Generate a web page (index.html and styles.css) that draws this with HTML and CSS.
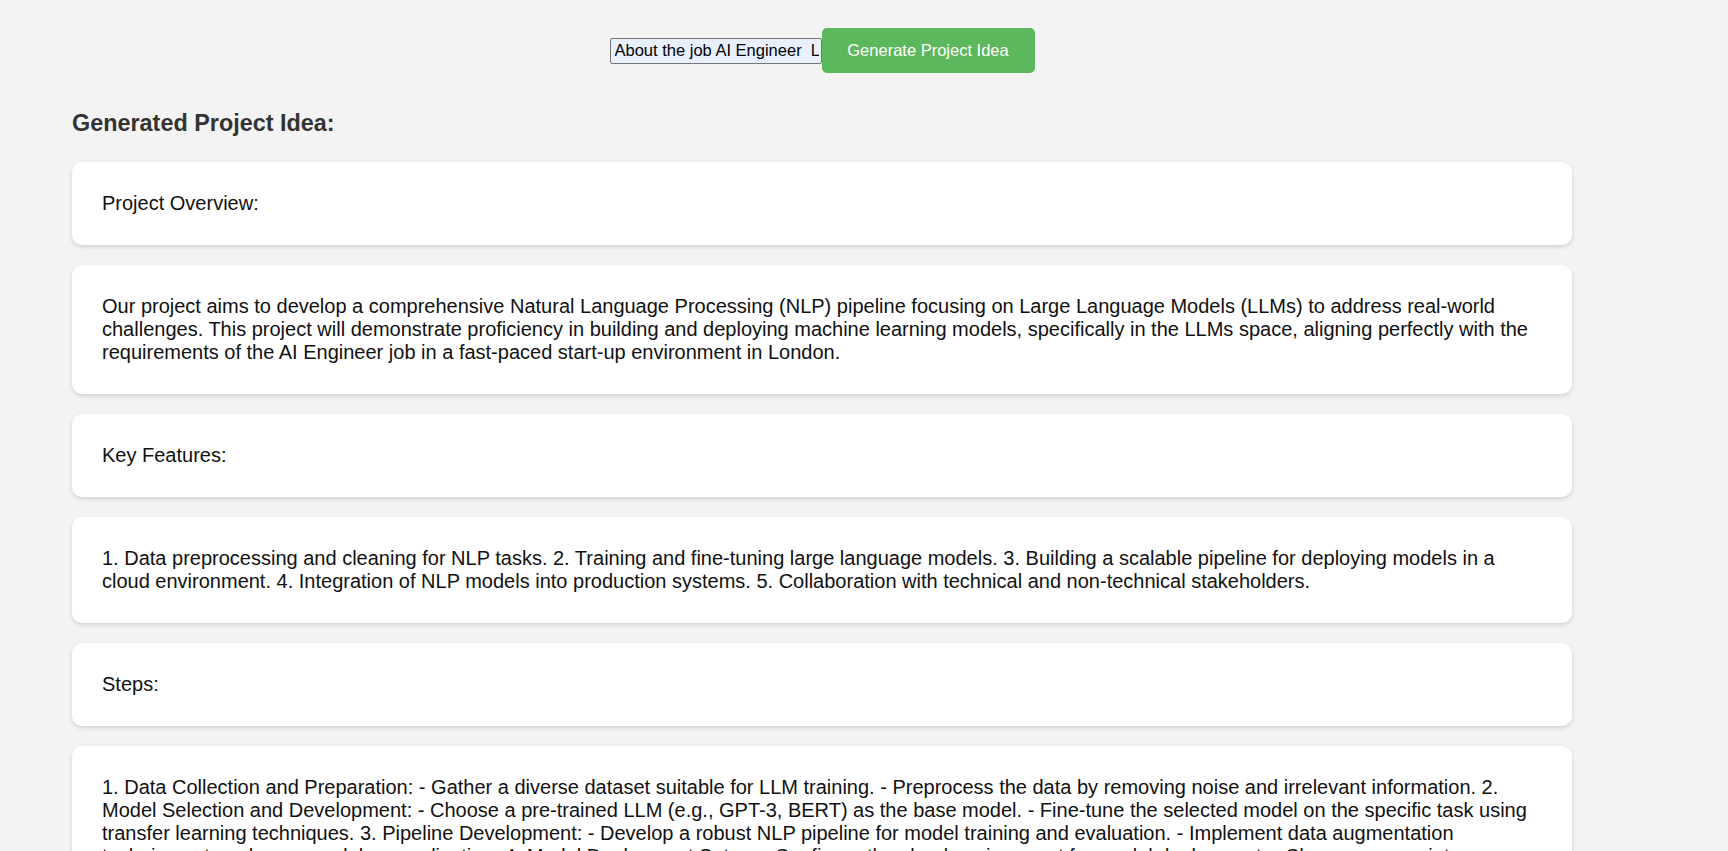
FILE: index.html
```html
<!DOCTYPE html>
<html lang="en">
<head>
<meta charset="utf-8">
<title>Project Idea Generator</title>
<link rel="stylesheet" href="styles.css">
</head>
<body>
<div class="container">
  <form class="form-row">
    <input class="job-input" type="text" value="About the job AI Engineer  London, United Kingdom">
    <button class="gen-btn" type="button">Generate Project Idea</button>
  </form>
  <h3 class="result-title">Generated Project Idea:</h3>
  <div class="cards">
    <div class="card">Project Overview:</div>
    <div class="card">Our project aims to develop a comprehensive Natural Language Processing (NLP) pipeline focusing on Large Language Models (LLMs) to address real-world challenges. This project will demonstrate proficiency in building and deploying machine learning models, specifically in the LLMs space, aligning perfectly with the requirements of the AI Engineer job in a fast-paced start-up environment in London.</div>
    <div class="card">Key Features:</div>
    <div class="card">1. Data preprocessing and cleaning for NLP tasks. 2. Training and fine-tuning large language models. 3. Building a scalable pipeline for deploying models in a cloud environment. 4. Integration of NLP models into production systems. 5. Collaboration with technical and non-technical stakeholders.</div>
    <div class="card">Steps:</div>
    <div class="card">1. Data Collection and Preparation: - Gather a diverse dataset suitable for LLM training. - Preprocess the data by removing noise and irrelevant information. 2. Model Selection and Development: - Choose a pre-trained LLM (e.g., GPT-3, BERT) as the base model. - Fine-tune the selected model on the specific task using transfer learning techniques. 3. Pipeline Development: - Develop a robust NLP pipeline for model training and evaluation. - Implement data augmentation techniques to enhance model generalization. 4. Model Deployment Setup: - Configure the cloud environment for model deployment. - Choose appropriate infrastructure for scalability and reliability. 5. Integration and Testing: - Integrate the NLP models into production systems. - Conduct thorough testing to ensure performance and accuracy. 6. Collaboration: - Work closely with technical and non-technical stakeholders to gather feedback and iterate on the solution.</div>
  </div>
</div>
</body>
</html>
```

FILE: styles.css
```css
html, body {
  margin: 0;
  padding: 0;
}

body {
  background: #f3f3f3;
  font-family: "Liberation Sans", Arial, sans-serif;
  color: #111;
}

.container {
  width: 1500px;
  margin-left: 72px;
  padding-top: 28px;
  padding-bottom: 40px;
}

.form-row {
  display: flex;
  justify-content: center;
  align-items: center;
  margin: 0;
}

.job-input {
  box-sizing: border-box;
  width: 212px;
  height: 26px;
  margin: 0;
  padding: 0 2px 0 4px;
  border: 1px solid #767676;
  border-radius: 2px;
  background: #e8f0fe;
  color: #000;
  font-family: "Liberation Sans", Arial, sans-serif;
  font-size: 16.5px;
}

.gen-btn {
  box-sizing: border-box;
  width: 213px;
  height: 45px;
  margin: 0;
  padding: 0 10px;
  border: none;
  border-radius: 5px;
  background: #5cb85c;
  color: #fff;
  font-family: "Liberation Sans", Arial, sans-serif;
  font-size: 16.5px;
  white-space: nowrap;
  cursor: pointer;
}

.result-title {
  margin: 37px 0 25px 0;
  font-size: 23.4px;
  line-height: 27px;
  font-weight: bold;
  color: #333;
}

.cards {
  display: flex;
  flex-direction: column;
  gap: 20px;
}

.card {
  background: #fff;
  border-radius: 10px;
  padding: 30px;
  box-shadow: 0 2px 4px rgba(0, 0, 0, 0.14);
  font-size: 20px;
  line-height: 23px;
  color: #111;
}
```
